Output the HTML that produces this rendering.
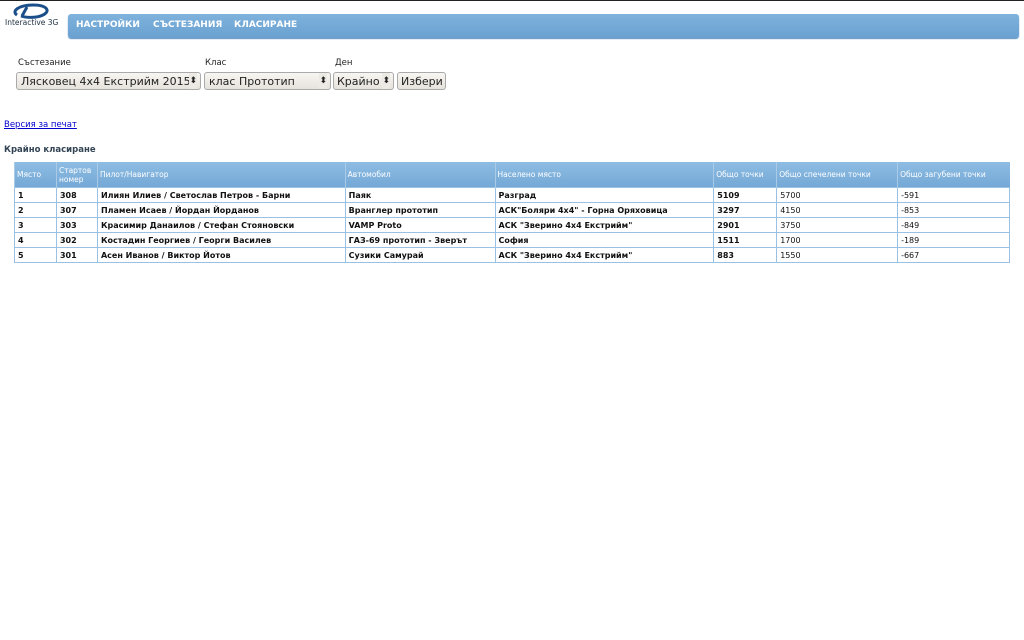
<!DOCTYPE html>
<html><head><meta charset="utf-8"><style>
body{margin:0;width:1024px;height:640px;background:#fff;font-family:"DejaVu Sans","Liberation Sans",sans-serif;position:relative;overflow:hidden;border-top:1px solid #222;box-sizing:border-box}
.nav{position:absolute;left:68px;top:13px;width:951px;height:24px;border-radius:3px;background:linear-gradient(#7fb2dc,#6aa1d1);box-shadow:0 1px 1px #5a8fbf}
.nav span{position:absolute;top:6px;color:#fff;font-weight:bold;font-size:9px}
.logo{position:absolute;left:5px;top:2px;width:55px}
.logo .t{position:absolute;left:0;top:15px;font-size:7.5px;color:#234;white-space:nowrap}
.lbl{position:absolute;top:57px;font-size:8.5px;color:#222}
.sel{position:absolute;top:71px;height:18px;border:1px solid #aaa;border-radius:3px;background:linear-gradient(#f8f6f2,#e6e2dc);font-size:11px;line-height:17px;padding-left:4px;box-sizing:border-box;color:#222;white-space:nowrap;overflow:hidden}
.sel i{position:absolute;right:3px;top:0;font-style:normal;font-size:9px;background:#ede9e4}
a{position:absolute;left:4px;top:119px;font-size:8.5px;color:#00c}
h3{position:absolute;left:4px;top:144px;margin:0;font-size:8.5px;color:#345}
table{position:absolute;left:14px;top:161px;width:996px;border-collapse:collapse;font-size:8px}
th{background:linear-gradient(#8ebde3,#74a8d6);color:#fff;font-weight:normal;text-align:left;height:25px;padding:0 2px;border-left:1px solid #a9cbe8;font-size:7.5px;line-height:9px}
td{height:14px;padding:0 3px;border:1px solid #9bc1e2;color:#111;font-weight:bold}
td.n{font-weight:normal}
</style></head><body>
<div class="logo"><svg width="50" height="16" viewBox="0 0 50 16"><path d="M12 12 C6 8 14 2 28 2 C42 2 46 8 38 12 C32 15 22 15 16 13" fill="none" stroke="#1b4f8a" stroke-width="3"/><path d="M22 4 L17 13" stroke="#1b4f8a" stroke-width="3"/></svg><div class="t">Interactive 3G</div></div>
<div class="nav"><span style="left:8px">НАСТРОЙКИ</span><span style="left:85px">СЪСТЕЗАНИЯ</span><span style="left:166px">КЛАСИРАНЕ</span></div>
<div class="lbl" style="left:18px">Състезание</div>
<div class="lbl" style="left:205px">Клас</div>
<div class="lbl" style="left:335px">Ден</div>
<div class="sel" style="left:16px;width:185px">Лясковец 4x4 Екстрийм 2015<i>⬍</i></div>
<div class="sel" style="left:204px;width:127px">клас Прототип<i>⬍</i></div>
<div class="sel" style="left:333px;width:61px;padding-left:3px">Крайно<i>⬍</i></div>
<div class="sel" style="left:397px;width:49px;padding-left:3px">Избери</div>
<a href="#">Версия за печат</a>
<h3>Крайно класиране</h3>
<table>
<colgroup><col style="width:42px"><col style="width:41px"><col style="width:248px"><col style="width:150px"><col style="width:219px"><col style="width:63px"><col style="width:121px"><col style="width:112px"></colgroup>
<tr><th>Място</th><th>Стартов номер</th><th>Пилот/Навигатор</th><th>Автомобил</th><th>Населено място</th><th>Общо точки</th><th>Общо спечелени точки</th><th>Общо загубени точки</th></tr>
<tr><td>1</td><td>308</td><td>Илиян Илиев / Светослав Петров - Барни</td><td>Паяк</td><td>Разград</td><td>5109</td><td class="n">5700</td><td class="n">-591</td></tr>
<tr><td>2</td><td>307</td><td>Пламен Исаев / Йордан Йорданов</td><td>Вранглер прототип</td><td>АСК"Боляри 4x4" - Горна Оряховица</td><td>3297</td><td class="n">4150</td><td class="n">-853</td></tr>
<tr><td>3</td><td>303</td><td>Красимир Данаилов / Стефан Стояновски</td><td>VAMP Proto</td><td>АСК "Зверино 4x4 Екстрийм"</td><td>2901</td><td class="n">3750</td><td class="n">-849</td></tr>
<tr><td>4</td><td>302</td><td>Костадин Георгиев / Георги Василев</td><td>ГАЗ-69 прототип - Зверът</td><td>София</td><td>1511</td><td class="n">1700</td><td class="n">-189</td></tr>
<tr><td>5</td><td>301</td><td>Асен Иванов / Виктор Йотов</td><td>Сузики Самурай</td><td>АСК "Зверино 4x4 Екстрийм"</td><td>883</td><td class="n">1550</td><td class="n">-667</td></tr>
</table>
</body></html>
